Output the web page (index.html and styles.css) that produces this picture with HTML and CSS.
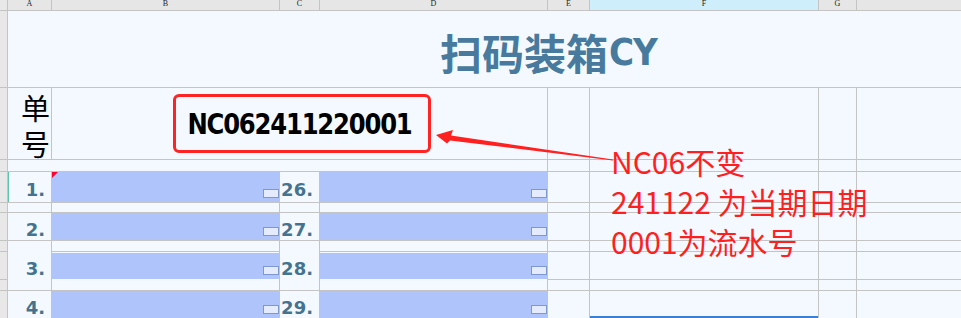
FILE: index.html
```html
<!DOCTYPE html>
<html lang="zh-CN">
<head>
    <meta charset="UTF-8">
    <meta name="viewport" content="width=device-width, initial-scale=1.0">
    <title>扫码装箱CY</title>
    <link rel="stylesheet" href="styles.css">
</head>
<body>
    <div class="sheet">
        <!-- column headers -->
        <div class="corner"></div>
        <div class="colhead">A</div>
        <div class="colhead">B</div>
        <div class="colhead">C</div>
        <div class="colhead">D</div>
        <div class="colhead">E</div>
        <div class="colhead is-active">F</div>
        <div class="colhead">G</div>
        <div class="colhead"></div>

        <!-- title -->
        <div class="rowhead"></div>
        <div class="title-cell">扫码装箱<span class="latin">CY</span></div>

        <!-- order number -->
        <div class="rowhead"></div>
        <div class="cell label-cell">单号</div>
        <div class="cell order-cell"><span class="order-box"><span class="order-no">NC062411220001</span></span></div>
        <div class="cell"></div>
        <div class="cell"></div>
        <div class="cell"></div>
        <div class="cell"></div>

        <!-- spacer -->
        <div class="rowhead"></div>
        <div class="cell span-4"></div>
        <div class="cell"></div>
        <div class="cell"></div>
        <div class="cell"></div>
        <div class="cell"></div>

        <!-- 1 / 26 -->
        <div class="rowhead"></div>
        <div class="cell num is-current">1.</div>
        <div class="scan has-note"><span class="handle"></span></div>
        <div class="cell num">26.</div>
        <div class="scan"><span class="handle"></span></div>
        <div class="cell"></div>
        <div class="cell"></div>
        <div class="cell"></div>
        <div class="cell"></div>

        <!-- spacer -->
        <div class="rowhead"></div>
        <div class="cell"></div>
        <div class="cell"></div>
        <div class="cell"></div>
        <div class="cell"></div>
        <div class="cell"></div>
        <div class="cell"></div>
        <div class="cell"></div>
        <div class="cell"></div>

        <!-- 2 / 27 -->
        <div class="rowhead"></div>
        <div class="cell num">2.</div>
        <div class="scan"><span class="handle"></span></div>
        <div class="cell num">27.</div>
        <div class="scan"><span class="handle"></span></div>
        <div class="cell"></div>
        <div class="cell"></div>
        <div class="cell"></div>
        <div class="cell"></div>

        <!-- 3 / 28 (three sheet rows) -->
        <div class="rowhead"></div>
        <div class="cell num rows-3">3.</div>
        <div class="cell"></div>
        <div class="cell num rows-3">28.</div>
        <div class="cell"></div>
        <div class="cell"></div>
        <div class="cell"></div>
        <div class="cell"></div>
        <div class="cell"></div>

        <div class="rowhead"></div>
        <div class="cell scan-wrap"><div class="scan"><span class="handle"></span></div></div>
        <div class="cell scan-wrap"><div class="scan"><span class="handle"></span></div></div>
        <div class="cell"></div>
        <div class="cell"></div>
        <div class="cell"></div>
        <div class="cell"></div>

        <div class="rowhead"></div>
        <div class="cell"></div>
        <div class="cell"></div>
        <div class="cell"></div>
        <div class="cell"></div>

        <!-- 4 / 29 -->
        <div class="rowhead"></div>
        <div class="cell num">4.</div>
        <div class="scan"><span class="handle"></span></div>
        <div class="cell num">29.</div>
        <div class="scan"><span class="handle"></span></div>
        <div class="cell"></div>
        <div class="cell is-selected"></div>
        <div class="cell"></div>
        <div class="cell"></div>

        <!-- annotation drawn over the sheet -->
        <svg class="arrow" width="961" height="318" viewBox="0 0 961 318">
            <polygon points="436,135 453,130 451,135.5 613,159.5 613,160.5 450,140.5 447,143.5" fill="#ff2020"/>
        </svg>
        <div class="note">NC06不变<br>241122 为当期日期<br>0001为流水号</div>
    </div>
</body>
</html>
```

FILE: styles.css
```css
body {
    margin: 0;
    background-color: #f3f9ff;
    overflow: hidden;
    font-family: "Noto Sans CJK SC", sans-serif;
}

.sheet {
    position: relative;
    display: grid;
    grid-template-columns: 7px 43px 227px 39px 227px 41px 228px 37px 1fr;
    grid-template-rows: 10px 76px 71px 11px 30px 9px 27px 10px 27px 10px 27px;
    gap: 1px;
    width: 961px;
    height: 318px;
    overflow: hidden;
    background-color: #c4c4c4;
}

.corner,
.rowhead {
    background-color: #e8e8e8;
}

.colhead {
    background-color: #e6e6e6;
    text-align: center;
    font-family: "Liberation Serif", serif;
    font-size: 8px;
    line-height: 8px;
    color: #222;
}

.colhead.is-active {
    background-color: #cfeefb;
}

.cell {
    background-color: #f3f9ff;
}

.span-4 {
    grid-column: span 4;
}

.rows-3 {
    grid-row: span 3;
}

.title-cell {
    grid-column: 2 / -1;
    display: flex;
    align-items: center;
    padding: 5px 0 0 432px;
    background-color: #f3f9ff;
    color: #477a9c;
    font-size: 42px;
    font-weight: 700;
    white-space: nowrap;
}

.title-cell .latin {
    font-family: "DejaVu Sans Condensed", "DejaVu Sans", sans-serif;
    font-size: 38px;
    letter-spacing: -1px;
    margin-left: 1px;
}

.label-cell {
    padding: 1px 0 0 13px;
    font-size: 29px;
    line-height: 36px;
    color: #000;
}

.order-cell {
    grid-column: span 3;
    display: flex;
    align-items: center;
    justify-content: center;
    padding-left: 4px;
}

.order-box {
    display: flex;
    align-items: center;
    justify-content: center;
    box-sizing: border-box;
    width: 258px;
    height: 59px;
    padding-right: 4px;
    border: 3px solid #ff2424;
    border-radius: 6px;
}

.order-no {
    display: block;
    font-family: "DejaVu Sans Condensed", "DejaVu Sans", sans-serif;
    font-size: 27px;
    font-weight: 700;
    letter-spacing: -1.2px;
    color: #000;
    transform: scaleY(1.08);
}

.num {
    display: flex;
    align-items: center;
    justify-content: flex-end;
    padding: 5px 6px 0 0;
    font-family: "DejaVu Sans", sans-serif;
    font-size: 18px;
    font-weight: 600;
    color: #44738f;
}

.num.is-current {
    box-shadow: inset 1px 0 #5ec5ad;
}

.scan {
    position: relative;
    display: flex;
    align-items: flex-end;
    justify-content: flex-end;
    padding-bottom: 4px;
    box-sizing: border-box;
    background-color: #afc4fb;
}

.scan-wrap {
    grid-row: span 2;
    padding-top: 1px;
}

.scan-wrap .scan {
    height: 26px;
}

.handle {
    display: block;
    box-sizing: border-box;
    width: 16px;
    height: 9px;
    border: 1px solid #7d98cf;
    background-color: #e3ebfc;
}

.has-note::before {
    content: "";
    position: absolute;
    left: 0;
    top: 0;
    border-top: 6px solid #ff0033;
    border-right: 6px solid transparent;
}

.is-selected {
    box-shadow: inset 0 -2px #3d7fd6;
}

.arrow {
    position: absolute;
    left: 0;
    top: 0;
    pointer-events: none;
}

.note {
    position: absolute;
    left: 611px;
    top: 141px;
    color: #ff1f1f;
    font-size: 30px;
    line-height: 40px;
    white-space: nowrap;
}
```
